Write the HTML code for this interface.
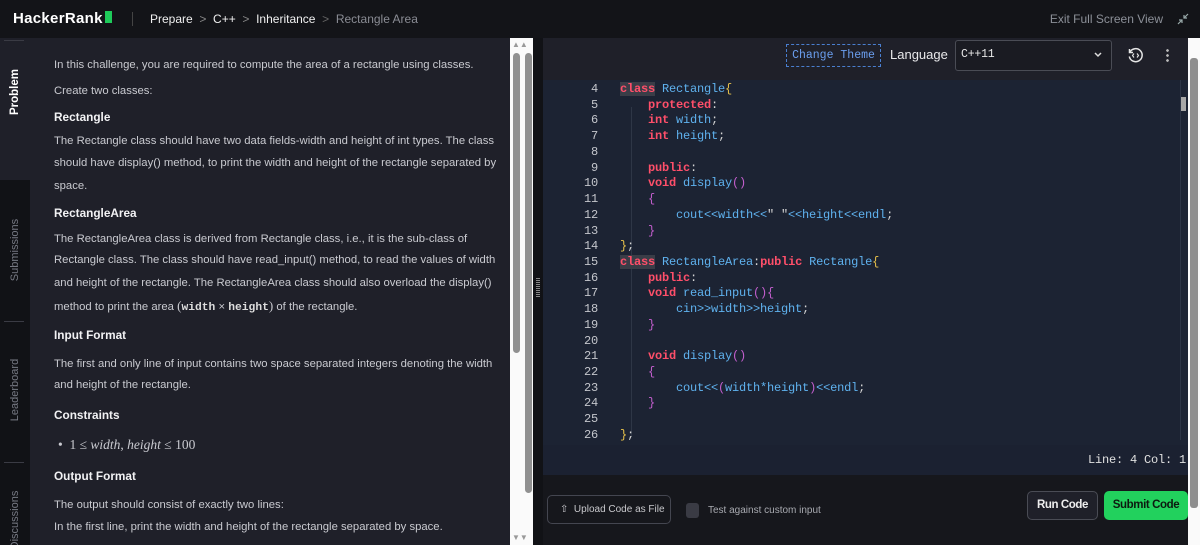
<!DOCTYPE html>
<html><head><style>
*{margin:0;padding:0;box-sizing:border-box}
html,body{width:1200px;height:545px;overflow:hidden}
body{background:#16171c;font-family:"Liberation Sans",sans-serif;position:relative}
.a{position:absolute;white-space:nowrap}
.t{color:#c9cad0;font-size:11.3px;left:54px}
.b{color:#f2f2f4;font-size:11.8px;font-weight:bold;left:54px}
.code{font-family:"Liberation Mono",monospace;font-size:12px;letter-spacing:-0.2px}
.ln{position:absolute;left:560px;width:38px;text-align:right;color:#c4c6cc}
.cl{position:absolute;left:620px;color:#5fb2ef;white-space:pre}
.k{color:#ff4f6a;font-weight:bold}
.y{color:#e6c14b}.p{color:#c45fcf}.w{color:#d6d6d6}
.side{position:absolute;color:#777a84;font-size:11px;transform:rotate(-90deg);transform-origin:center;white-space:nowrap}
</style></head><body>
<!-- header -->
<div class="a" style="left:0;top:0;width:1200px;height:38px;background:#131418"></div>
<div class="a" style="left:13px;top:10px;color:#fff;font-size:15px;font-weight:bold;letter-spacing:0.3px">HackerRank<span style="display:inline-block;width:7px;height:12px;background:#1ecb5a;margin-left:2px"></span></div>
<div class="a" style="left:132px;top:12px;width:1px;height:14px;background:#444"></div>
<div class="a" style="left:150px;top:12px;font-size:12px;color:#f0f0f0">Prepare <span style="color:#888">&nbsp;&gt;&nbsp;</span> C++ <span style="color:#888">&nbsp;&gt;&nbsp;</span> Inheritance <span style="color:#666">&nbsp;&gt;&nbsp;</span> <span style="color:#8a8c94">Rectangle Area</span></div>
<div class="a" style="right:37px;top:12px;font-size:12px;color:#8c9098">Exit Full Screen View</div>
<svg class="a" style="left:1177px;top:13px" width="12" height="12" viewBox="0 0 12 12" stroke="#9aa" fill="none" stroke-width="1.2"><path d="M11 1L7 5M7 2v3h3M1 11l4-4M2 7h3v3"/></svg>
<!-- sidebar -->
<div class="a" style="left:0;top:38px;width:30px;height:507px;background:#111216"></div>
<div class="a" style="left:0;top:38px;width:30px;height:142px;background:#1f2029"></div>
<div class="a" style="left:4px;top:40px;width:20px;height:1px;background:#3a3b44"></div>
<div class="a" style="left:4px;top:321px;width:20px;height:1px;background:#3a3b44"></div>
<div class="a" style="left:4px;top:462px;width:20px;height:1px;background:#3a3b44"></div>
<div class="side" style="left:-13px;top:86px;width:56px;text-align:center;color:#fff;font-weight:bold;font-size:11.5px">Problem</div>
<div class="side" style="left:-23px;top:244px;width:76px;text-align:center">Submissions</div>
<div class="side" style="left:-23px;top:384px;width:76px;text-align:center">Leaderboard</div>
<div class="side" style="left:-23px;top:514px;width:76px;text-align:center">Discussions</div>
<!-- left panel -->
<div class="a" style="left:30px;top:38px;width:480px;height:507px;background:#1f2029"></div>
<div class="a t" style="top:59px">In this challenge, you are required to compute the area of a rectangle using classes.</div>
<div class="a t" style="top:85px">Create two classes:</div>
<div class="a b" style="top:110px">Rectangle</div>
<div class="a t" style="top:135px">The Rectangle class should have two data fields-width and height of int types. The class</div>
<div class="a t" style="top:157px">should have display() method, to print the width and height of the rectangle separated by</div>
<div class="a t" style="top:180px">space.</div>
<div class="a b" style="top:206px">RectangleArea</div>
<div class="a t" style="top:233px">The RectangleArea class is derived from Rectangle class, i.e., it is the sub-class of</div>
<div class="a t" style="top:254px">Rectangle class. The class should have read_input() method, to read the values of width</div>
<div class="a t" style="top:277px">and height of the rectangle. The RectangleArea class should also overload the display()</div>
<div class="a t" style="top:298px">method to print the area <span style="font-family:'Liberation Serif',serif;font-size:13px">(</span><b style="font-family:'Liberation Mono',monospace;color:#ddd">width</b> × <b style="font-family:'Liberation Mono',monospace;color:#ddd">height</b><span style="font-family:'Liberation Serif',serif;font-size:13px">)</span> of the rectangle.</div>
<div class="a b" style="top:328px">Input Format</div>
<div class="a t" style="top:358px">The first and only line of input contains two space separated integers denoting the width</div>
<div class="a t" style="top:379px">and height of the rectangle.</div>
<div class="a b" style="top:408px">Constraints</div>
<div class="a t" style="top:437px;left:58px;font-family:'Liberation Serif',serif;font-size:13.5px">•&nbsp; 1 ≤ <i>width</i>, <i>height</i> ≤ 100</div>
<div class="a b" style="top:469px">Output Format</div>
<div class="a t" style="top:499px">The output should consist of exactly two lines:</div>
<div class="a t" style="top:521px">In the first line, print the width and height of the rectangle separated by space.</div>
<!-- scrollbars -->
<div class="a" style="left:510px;top:38px;width:23px;height:507px;background:#fafafa"></div>
<div class="a" style="left:513px;top:53px;width:7px;height:300px;background:#909090;border-radius:4px"></div>
<div class="a" style="left:525px;top:53px;width:7px;height:440px;background:#909090;border-radius:4px"></div>
<div class="a" style="left:512px;top:40px;font-size:8px;color:#999">▲▲</div>
<div class="a" style="left:512px;top:533px;font-size:8px;color:#999">▼▼</div>
<div class="a" style="left:533px;top:38px;width:10px;height:507px;background:#111216"></div>
<div class="a" style="left:536px;top:278px;width:4px;height:20px;background:repeating-linear-gradient(#888 0 1px,transparent 1px 2px)"></div>
<!-- editor -->
<div class="a" style="left:543px;top:38px;width:657px;height:42px;background:#1f2029"></div>
<div class="a" style="left:786px;top:44px;width:95px;height:23px;border:1px dashed #4a7fd0;color:#6b9ff0;font-family:'Liberation Mono',monospace;font-size:11.5px;text-align:center;line-height:21px">Change Theme</div>
<div class="a" style="left:890px;top:47px;color:#e8e8ea;font-size:13px">Language</div>
<div class="a" style="left:955px;top:40px;width:157px;height:31px;border:1px solid #4a4c55;border-radius:3px;background:#1a1b22"></div>
<div class="a code" style="left:961px;top:48px;color:#e8e8e8;font-size:11.5px">C++11</div>
<svg class="a" style="left:1094px;top:52px" width="8" height="6" viewBox="0 0 8 6" fill="none" stroke="#ddd" stroke-width="1.5"><path d="M1 1l3 3 3-3"/></svg>
<svg class="a" style="left:1127px;top:47px" width="17" height="17" viewBox="0 0 17 17" fill="none" stroke="#e6e6e6" stroke-width="1.5"><path d="M3 5A6.5 6.5 0 1 1 2.3 9.5M2.5 2v3.5H6"/><path d="M7 6.5L5.5 8.5 7 10.5M10 6.5l1.5 2-1.5 2" stroke-width="1.1"/></svg>
<div class="a" style="left:1166px;top:48px;width:3px;height:15px;background:radial-gradient(circle,#bbb 1.2px,transparent 1.5px) 0 0/3px 5px"></div>
<div class="a" style="left:1188px;top:38px;width:12px;height:507px;background:#fafafa"></div>
<div class="a" style="left:1190px;top:58px;width:8px;height:450px;background:#8e8e8e;border-radius:3px"></div>
<div class="a" style="left:543px;top:80px;width:645px;height:365px;background:#1c2333"></div>
<div class="a" style="left:543px;top:445px;width:645px;height:30px;background:#1c2333;opacity:.92"></div>
<div class="a" style="left:1180px;top:97px;width:6px;height:14px;background:#a8a8a8"></div>
<div class="a" style="left:1180px;top:80px;width:1px;height:360px;background:#2c3445"></div>
<div class="a" style="left:631px;top:107px;width:1px;height:330px;background:#2e3646"></div>
<div class="code">
<div class="ln" style="top:82px">4</div><div class="cl" style="top:82px"><span class="k" style="background:#3a3d47">class</span> Rectangle<span class="y">{</span></div>
<div class="ln" style="top:98px">5</div><div class="cl" style="top:98px">    <span class="k">protected</span><span class="w">:</span></div>
<div class="ln" style="top:113px">6</div><div class="cl" style="top:113px">    <span class="k">int</span> width<span class="w">;</span></div>
<div class="ln" style="top:129px">7</div><div class="cl" style="top:129px">    <span class="k">int</span> height<span class="w">;</span></div>
<div class="ln" style="top:145px">8</div>
<div class="ln" style="top:161px">9</div><div class="cl" style="top:161px">    <span class="k">public</span><span class="w">:</span></div>
<div class="ln" style="top:176px">10</div><div class="cl" style="top:176px">    <span class="k">void</span> display<span class="p">()</span></div>
<div class="ln" style="top:192px">11</div><div class="cl" style="top:192px">    <span class="p">{</span></div>
<div class="ln" style="top:208px">12</div><div class="cl" style="top:208px">        cout&lt;&lt;width&lt;&lt;<span class="w">" "</span>&lt;&lt;height&lt;&lt;endl<span class="w">;</span></div>
<div class="ln" style="top:224px">13</div><div class="cl" style="top:224px">    <span class="p">}</span></div>
<div class="ln" style="top:239px">14</div><div class="cl" style="top:239px"><span class="y">}</span><span class="w">;</span></div>
<div class="ln" style="top:255px">15</div><div class="cl" style="top:255px"><span class="k" style="background:#3a3d47">class</span> RectangleArea<span class="w">:</span><span class="k">public</span> Rectangle<span class="y">{</span></div>
<div class="ln" style="top:271px">16</div><div class="cl" style="top:271px">    <span class="k">public</span><span class="w">:</span></div>
<div class="ln" style="top:286px">17</div><div class="cl" style="top:286px">    <span class="k">void</span> read_input<span class="p">(){</span></div>
<div class="ln" style="top:302px">18</div><div class="cl" style="top:302px">        cin&gt;&gt;width&gt;&gt;height<span class="w">;</span></div>
<div class="ln" style="top:318px">19</div><div class="cl" style="top:318px">    <span class="p">}</span></div>
<div class="ln" style="top:334px">20</div>
<div class="ln" style="top:349px">21</div><div class="cl" style="top:349px">    <span class="k">void</span> display<span class="p">()</span></div>
<div class="ln" style="top:365px">22</div><div class="cl" style="top:365px">    <span class="p">{</span></div>
<div class="ln" style="top:381px">23</div><div class="cl" style="top:381px">        cout&lt;&lt;<span class="p">(</span>width*height<span class="p">)</span>&lt;&lt;endl<span class="w">;</span></div>
<div class="ln" style="top:396px">24</div><div class="cl" style="top:396px">    <span class="p">}</span></div>
<div class="ln" style="top:412px">25</div>
<div class="ln" style="top:428px">26</div><div class="cl" style="top:428px"><span class="y">}</span><span class="w">;</span></div>
<div class="a" style="left:1088px;top:453px;color:#e0e0e0">Line: 4 Col: 1</div>
</div>
<!-- bottom -->
<div class="a" style="left:547px;top:495px;width:124px;height:29px;border:1px solid #444650;border-radius:5px;color:#c8c8cc;font-size:10px;line-height:27px;padding-left:12px">⇧&nbsp; Upload Code as File</div>
<div class="a" style="left:686px;top:503px;width:13px;height:15px;background:#3a3b44;border-radius:3px"></div>
<div class="a" style="left:708px;top:505px;color:#a8aab0;font-size:10px">Test against custom input</div>
<div class="a" style="left:1027px;top:491px;width:71px;height:29px;border:1px solid #4a4c55;border-radius:5px;background:#1f2029;color:#eee;font-size:11.5px;font-weight:bold;text-align:center;line-height:27px;letter-spacing:-0.4px">Run Code</div>
<div class="a" style="left:1104px;top:491px;width:84px;height:29px;border-radius:5px;background:#22d15d;color:#0d1a10;font-size:11.5px;font-weight:bold;text-align:center;line-height:29px;letter-spacing:-0.4px">Submit Code</div>
</body></html>
